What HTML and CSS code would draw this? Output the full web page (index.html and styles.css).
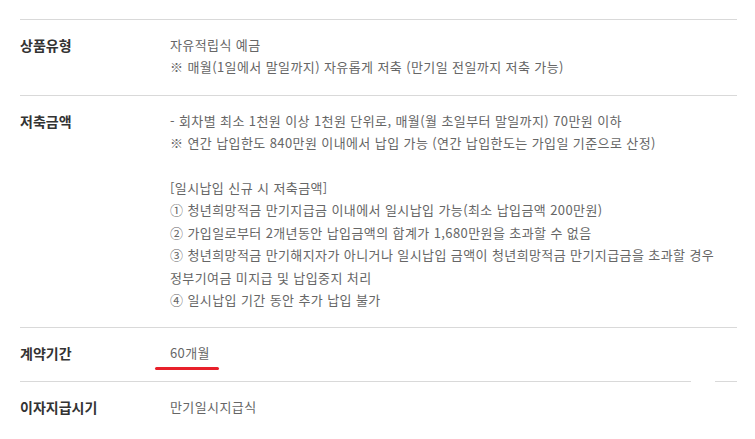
FILE: index.html
```html
<html lang="ko">
<head>
    <meta charset="UTF-8"/>
    <meta name="viewport" content="width=device-width, initial-scale=1.0"/>
    <title>청년희망적금 상품안내</title>
    <link rel="stylesheet" href="styles.css">
</head>
<body>

<div class="product_info">
    <div class="info_row">
        <div class="info_label">상품유형</div>
        <div class="info_value">
            자유적립식 예금<br>
            ※ 매월(1일에서 말일까지) 자유롭게 저축 (만기일 전일까지 저축 가능)
        </div>
    </div>

    <div class="info_row">
        <div class="info_label">저축금액</div>
        <div class="info_value">
            - 회차별 최소 1천원 이상 1천원 단위로, 매월(월 초일부터 말일까지) 70만원 이하<br>
            ※ 연간 납입한도 840만원 이내에서 납입 가능 (연간 납입한도는 가입일 기준으로 산정)<br>
            <br>
            [일시납입 신규 시 저축금액]<br>
            ① 청년희망적금 만기지급금 이내에서 일시납입 가능(최소 납입금액 200만원)<br>
            ② 가입일로부터 2개년동안 납입금액의 합계가 1,680만원을 초과할 수 없음<br>
            ③ 청년희망적금 만기해지자가 아니거나 일시납입 금액이 청년희망적금 만기지급금을 초과할 경우<br>
            정부기여금 미지급 및 납입중지 처리<br>
            ④ 일시납입 기간 동안 추가 납입 불가
        </div>
    </div>

    <div class="info_row">
        <div class="info_label">계약기간</div>
        <div class="info_value">
            <span class="marked">60개월</span>
        </div>
    </div>

    <div class="info_row last_row">
        <div class="info_label">이자지급시기</div>
        <div class="info_value">만기일시지급식</div>
        <span class="line_gap"></span>
    </div>
</div>

</body>
</html>
```

FILE: styles.css
```css
body {
    margin: 0;
    background: #fff;
    font-family: "Noto Sans CJK KR", "Noto Sans", sans-serif;
}

.product_info {
    margin: 19px 18px 0 20px;
    border-top: 1px solid #d9d9d9;
}

.info_row {
    position: relative;
    display: grid;
    grid-template-columns: 150px 1fr;
    padding: 14px 0 16px;
    border-bottom: 1px solid #d9d9d9;
    line-height: 22.4px;
}

.info_label {
    font-size: 14px;
    font-weight: bold;
    color: #333;
}

.info_value {
    font-size: 13px;
    letter-spacing: 0.4px;
    color: #666;
}

.marked {
    position: relative;
}

/* red highlight drawn under the period */
.marked::after {
    content: "";
    position: absolute;
    left: -15px;
    right: -9px;
    bottom: -8px;
    height: 3px;
    border-radius: 2px;
    background: #e8202a;
}

.last_row {
    border-bottom: none;
    border-top: 1px solid #d9d9d9;
    margin-top: -1px;
}

.line_gap {
    position: absolute;
    top: -1px;
    left: 671px;
    width: 24px;
    height: 1px;
    background: #fff;
}
```
